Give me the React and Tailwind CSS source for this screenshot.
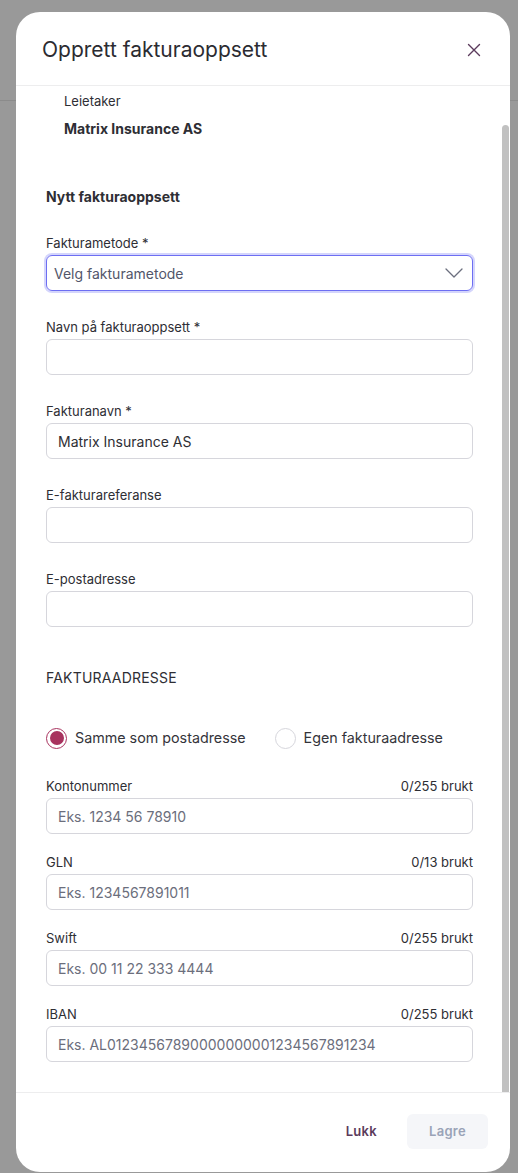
import React from "react";

const fields = [
  { label: "Navn på fakturaoppsett *", value: "" },
  { label: "Fakturanavn *", value: "Matrix Insurance AS" },
  { label: "E-fakturareferanse", value: "" },
  { label: "E-postadresse", value: "" },
];

const counted = [
  { label: "Kontonummer", count: "0/255 brukt", placeholder: "Eks. 1234 56 78910" },
  { label: "GLN", count: "0/13 brukt", placeholder: "Eks. 1234567891011" },
  { label: "Swift", count: "0/255 brukt", placeholder: "Eks. 00 11 22 333 4444" },
  { label: "IBAN", count: "0/255 brukt", placeholder: "Eks. AL01234567890000000001234567891234" },
];

const Radio = ({ checked, label }) => (
  <label className="flex items-center gap-[8px] cursor-pointer">
    {checked ? (
      <span className="w-[21px] h-[21px] rounded-full border-[1.5px] border-[#a8325e] flex items-center justify-center">
        <span className="w-[14px] h-[14px] rounded-full bg-[#a8325e]" />
      </span>
    ) : (
      <span className="w-[21px] h-[21px] rounded-full border border-[#d6d6dc] bg-white" />
    )}
    <span className="text-[14.3px] text-[#34343a]">{label}</span>
  </label>
);

const App = () => {
  return (
    <div
      className="relative w-full h-[1173px] bg-[#999999] overflow-hidden"
      style={{ fontFamily: "Inter, 'Noto Sans', sans-serif" }}
    >
      <div className="h-[101px] border-b border-[#8b8b8b]" />

      <div className="absolute left-[16px] top-[12px] w-[494px] h-[1160px] bg-white rounded-[24px] flex flex-col overflow-hidden">
        <div className="h-[74px] shrink-0 flex items-center justify-between pl-[26px] pr-[29px] border-b border-[#ededee]">
          <h2 className="text-[21px] text-[#2b2b31] font-normal pt-[2px]">
            Opprett fakturaoppsett
          </h2>
          <button className="text-[#5b3b5c] pt-[2px]">
            <svg width="14" height="14" viewBox="0 0 14 14" fill="none" stroke="currentColor" strokeWidth="1.4" strokeLinecap="round">
              <path d="M1.5 1.5l11 11M12.5 1.5l-11 11" />
            </svg>
          </button>
        </div>

        <div className="relative flex-1 overflow-hidden">
          <div className="absolute right-[1px] top-[39px] bottom-0 w-[7px] rounded-t-[4px] bg-[#c1c1c1]" />

          <div className="pl-[30px] pr-[37px] pt-[5px] text-[#2e2e34]">
            <div className="pl-[18px]">
              <p className="text-[13px] leading-[20px]">Leietaker</p>
              <p className="mt-[8px] text-[14px] leading-[20px] font-bold">Matrix Insurance AS</p>
            </div>

            <h3 className="mt-[48px] text-[14px] leading-[20px] font-bold">Nytt fakturaoppsett</h3>

            <div className="mt-[27px]">
              <p className="text-[13px] leading-[18px] mb-[3px]">Fakturametode *</p>
              <div className="h-[36px] rounded-[6px] border-[1.5px] border-[#6d6ef2] ring-2 ring-[#d4d5fc] flex items-center justify-between pl-[7px] pr-[8px]">
                <span className="text-[14px] text-[#52566a]">Velg fakturametode</span>
                <svg width="20" height="12" viewBox="0 0 20 12" fill="none" stroke="#6b6f7e" strokeWidth="1.3" strokeLinecap="round" strokeLinejoin="round">
                  <path d="M2 2l8 8 8-8" />
                </svg>
              </div>
            </div>

            {fields.map((f) => (
              <div key={f.label} className="mt-[27px]">
                <p className="text-[13px] leading-[18px] mb-[3px]">{f.label}</p>
                <div className="h-[36px] rounded-[6px] border border-[#d6d6dc] flex items-center px-[11px]">
                  <span className="text-[14px] text-[#2e2e34]">{f.value}</span>
                </div>
              </div>
            ))}

            <h3 className="mt-[41px] text-[14px] leading-[20px] tracking-[0.2px]">FAKTURAADRESSE</h3>

            <div className="mt-[38px] h-[24px] flex items-center gap-[29px]">
              <Radio checked label="Samme som postadresse" />
              <Radio label="Egen fakturaadresse" />
            </div>

            <div className="mt-[27px] flex flex-col gap-[19px] pb-[30px]">
              {counted.map((f) => (
                <div key={f.label}>
                  <div className="flex justify-between text-[13px] leading-[18px] mb-[3px]">
                    <span>{f.label}</span>
                    <span>{f.count}</span>
                  </div>
                  <div className="h-[36px] rounded-[6px] border border-[#d6d6dc] flex items-center px-[11px]">
                    <span className="text-[14px] text-[#6b6e7c]">{f.placeholder}</span>
                  </div>
                </div>
              ))}
            </div>
          </div>
        </div>

        <div className="h-[80px] shrink-0 border-t border-[#ededee] flex justify-end items-start gap-[14px] pt-[21px] pr-[22px]">
          <button className="h-[35px] px-[16px] text-[13px] font-semibold text-[#5b3b5c] tracking-[0.3px]">
            Lukk
          </button>
          <button className="h-[35px] w-[81px] rounded-[6px] bg-[#f5f6f9] text-[13px] font-semibold text-[#9aa3b7] tracking-[0.3px]">
            Lagre
          </button>
        </div>
      </div>
    </div>
  );
};

export default App;
